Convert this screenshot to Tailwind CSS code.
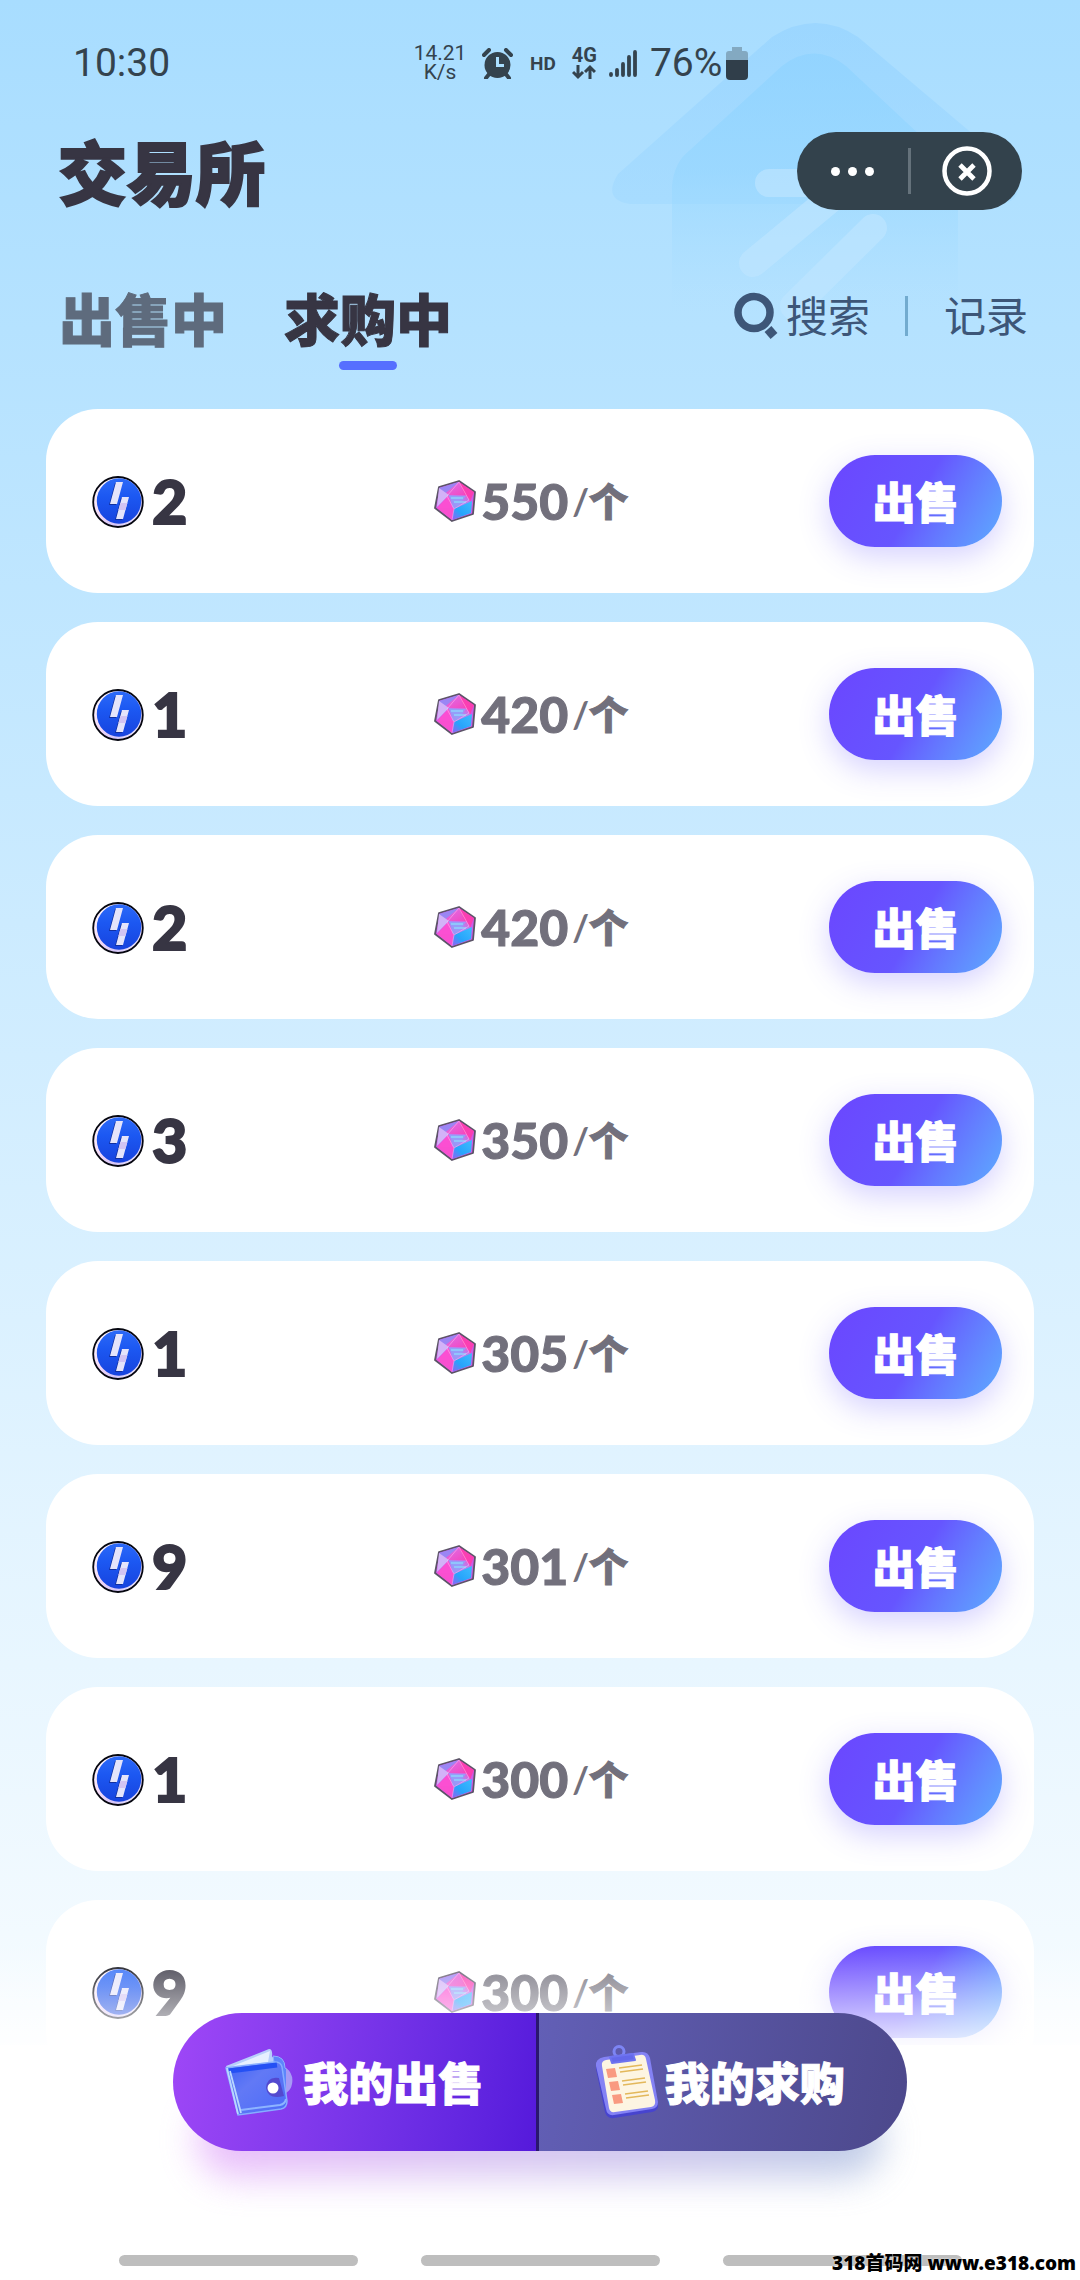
<!DOCTYPE html>
<html lang="zh-CN">
<head>
  <meta charset="UTF-8" />
  <meta name="viewport" content="width=device-width, initial-scale=1.0" />
  <title>交易所</title>
  <script src="https://cdn.jsdelivr.net/npm/@tailwindcss/browser@4"></script>
</head>
<body class="relative h-screen overflow-hidden bg-linear-to-b from-[#a8ddff] to-white font-['Lato','Noto_Sans_CJK_SC',sans-serif] text-[#373543]">

  <!-- shared artwork -->
  <svg class="absolute w-0 h-0" aria-hidden="true">
    <defs>
      <linearGradient id="coinFill" x1="0" y1="0" x2="0" y2="1">
        <stop offset="0" stop-color="#2c6af8" /><stop offset="0.4" stop-color="#1c58f2" /><stop offset="1" stop-color="#1743de" />
      </linearGradient>
      <linearGradient id="coinRim" x1="0" y1="0" x2="1" y2="1">
        <stop offset="0" stop-color="#ffffff" /><stop offset="0.45" stop-color="#f3d9f7" /><stop offset="0.7" stop-color="#d3c4f8" /><stop offset="1" stop-color="#ffffff" />
      </linearGradient>
      <linearGradient id="gemTop" x1="0" y1="0" x2="1" y2="1">
        <stop offset="0" stop-color="#d977f0" /><stop offset="1" stop-color="#f83fb8" />
      </linearGradient>
      <linearGradient id="gemMid" x1="0" y1="1" x2="1" y2="0">
        <stop offset="0" stop-color="#f54ad8" /><stop offset="0.5" stop-color="#a98cf8" /><stop offset="1" stop-color="#f052cf" />
      </linearGradient>
      <linearGradient id="gemBlue" x1="0" y1="1" x2="1" y2="0">
        <stop offset="0" stop-color="#9b5cf5" /><stop offset="0.4" stop-color="#27a4fb" /><stop offset="1" stop-color="#3fbcff" />
      </linearGradient>
      <linearGradient id="houseOuter" x1="0" y1="0" x2="0" y2="1">
        <stop offset="0" stop-color="#84caff" stop-opacity="0.35" /><stop offset="1" stop-color="#9ad6ff" stop-opacity="0.4" />
      </linearGradient>
      <linearGradient id="houseInner" x1="0" y1="0" x2="0" y2="1">
        <stop offset="0" stop-color="#8ad1ff" stop-opacity="0.55" /><stop offset="0.45" stop-color="#94d6ff" stop-opacity="0.6" /><stop offset="1" stop-color="#a8ddff" stop-opacity="0" />
      </linearGradient>
      <linearGradient id="walletFill" x1="0" y1="0" x2="1" y2="1">
        <stop offset="0" stop-color="#3d62f5" /><stop offset="0.4" stop-color="#6279f5" /><stop offset="1" stop-color="#4a6af8" />
      </linearGradient>
    </defs>
    <symbol id="coin" viewBox="0 0 52 52">
      <ellipse cx="26" cy="26" rx="24.800" ry="25" fill="url(#coinRim)" stroke="#05060f" stroke-width="1.800" />
      <ellipse cx="27" cy="25" rx="22.200" ry="22.800" fill="url(#coinFill)" />
      <path d="M24 6h7l-6 22h-7zM30 21h7l-6 22h-7z" fill="#12309f" transform="translate(-1 1)" />
      <path d="M24 6h7l-6 22h-7zM30 21h7l-6 22h-7z" fill="#e4e4fb" />
      <path d="m28.400 27h7l-2 7h-7z" fill="#d2c4f3" />
    </symbol>
    <symbol id="gem" viewBox="0 0 42 42">
      <path d="M25 1 41 12 39 34 18 41 1 28 5 7z" fill="#d05ae8" stroke="#5c5468" stroke-width="1.800" stroke-linejoin="round" />
      <path d="M25 2 5 8l3 10z" fill="#9a86f4" />
      <path d="M25 2 8 16l27 1z" fill="url(#gemTop)" />
      <path d="M25 2 40 12 35 24z" fill="#fb3eb2" />
      <path d="M5 8 3 27l12-12z" fill="#d3b2f8" />
      <path d="M15 15 3 28l16 1z" fill="#fb4fd2" />
      <path d="M14 15h18l6 9-14 4z" fill="url(#gemMid)" />
      <path d="M15 16h17l-9 12h-4z" fill="#8fa4fa" opacity="0.8" />
      <path d="M17 18h12M20 22h12" stroke="#8fe0ff" stroke-width="1.600" opacity="0.8" />
      <path d="M3 28h17l-2 12z" fill="#f94fd0" />
      <path d="M20 29 38 21 37 33 18 40z" fill="url(#gemBlue)" />
      <path d="M25 2 13 16 20 29M25 2l10 18-15 9-2 11" fill="none" stroke="#ffc6f2" stroke-width="0.800" opacity="0.600" />
    </symbol>
  </svg>

  <!-- faint house behind the header -->
  <svg class="absolute right-[60px] top-[20px] w-[408px] h-[300px]" viewBox="0 0 408 300" aria-hidden="true">
    <path d="M160 17Q204-11 246 17L401 148Q416 184 384 184H18Q-10 180 6 154z" fill="url(#houseOuter)" />
    <path d="M170 46Q202 21 234 46L324 130Q346 148 346 166V292H60V166Q62 142 78 130z" fill="url(#houseInner)" />
    <g fill="none" stroke="#bfe5ff" stroke-opacity="0.650" stroke-width="28" stroke-linecap="round">
      <path d="M157 163H216Q232 166 222 176L141 243" />
      <path d="M261 208 182 286" />
    </g>
  </svg>

  <div class="relative flex h-full flex-col">
    <!-- status bar -->
    <div class="flex h-[126px] shrink-0 items-center pl-[73px] font-['Roboto',sans-serif] text-[#34434e]">
      <span class="w-[340px] text-[39px] leading-none">10:30</span>
      <span class="w-[54px] text-center text-[21px] leading-[19px]">14.21 K/s</span>
      <svg class="ml-[15px] w-[31px] h-[31px]" viewBox="0 0 31 31" aria-label="闹钟">
        <path d="m2 7 5-5M29 7l-5-5M8 25l-4 5M23 25l4 5" stroke="#34434e" stroke-width="4" stroke-linecap="round" />
        <circle cx="15.500" cy="17" r="13" fill="#34434e" />
        <path d="M15.500 9v8.500H22" fill="none" stroke="#abdfff" stroke-width="3" />
      </svg>
      <span class="ml-[17px] text-[19px] font-bold leading-none">HD</span>
      <span class="ml-[16px] flex flex-col items-center text-[20px] font-bold leading-[18px]">4G
        <svg class="w-[24px] h-[16px]" viewBox="0 0 24 16"><path d="M6 1v11M1 8l5 5 5-5M18 15V4M13 8l5-5 5 5" fill="none" stroke="#34434e" stroke-width="3" /></svg>
      </span>
      <svg class="ml-[11px] w-[29px] h-[29px]" viewBox="0 0 29 29" aria-label="信号">
        <path d="M3 25v1M9 21v5M15 15v11M21 8v18M27 3v23" stroke="#34434e" stroke-width="3.800" stroke-linecap="round" />
      </svg>
      <span class="ml-[13px] text-[39px] leading-none">76%</span>
      <svg class="ml-[4px] w-[22px] h-[34px]" viewBox="0 0 22 34" aria-label="电池">
        <path d="M6 1h10v4h3q3 0 3 3v6H0V8q0-3 3-3h3z" fill="#83a9c1" />
        <path d="M0 14h22v16q0 4-4 4H4q-4 0-4-4z" fill="#303e4a" />
      </svg>
    </div>

    <!-- title + mini program capsule -->
    <header class="flex h-[90px] shrink-0 items-center justify-between pl-[58px] pr-[58px]">
      <h1 class="pt-[4px] text-[69px] font-black leading-none [-webkit-text-stroke:2px]">交易所</h1>
      <div class="flex h-[78px] w-[225px] items-center rounded-full bg-[#33424c]">
        <button type="button" aria-label="更多" class="flex h-full flex-1 items-center justify-center gap-[8px]">
          <span class="size-[9px] rounded-full bg-white"></span>
          <span class="size-[9px] rounded-full bg-white"></span>
          <span class="size-[9px] rounded-full bg-white"></span>
        </button>
        <span class="h-[46px] w-[3px] bg-[#65727b]"></span>
        <button type="button" aria-label="关闭" class="flex h-full flex-1 items-center justify-center">
          <svg class="size-[50px]" viewBox="0 0 50 50"><circle cx="25" cy="25" r="22.500" fill="none" stroke="#fff" stroke-width="4.500" /><path d="m18 19 14 14M32 19 18 33" stroke="#fff" stroke-width="4.800" /></svg>
        </button>
      </div>
    </header>

    <nav class="flex h-[193px] shrink-0 items-start justify-between pl-[59px] pr-[52px] pt-[74px]">
      <div class="flex gap-[57px] text-[56px] font-black leading-[60px] [-webkit-text-stroke:1px]">
        <button type="button" class="text-[#5e6b7d]">出售中</button>
        <button type="button" class="relative">求购中
          <span class="absolute left-1/2 top-[71px] h-[9px] w-[58px] -translate-x-1/2 rounded-full bg-[#566fff]"></span>
        </button>
      </div>
      <div class="flex h-[52px] items-center text-[42px] leading-none text-[#3d5678]">
        <a href="#search" class="flex items-center gap-[8px]">
          <svg class="w-[45px] h-[48px]" viewBox="0 0 45 48" aria-hidden="true">
            <circle cx="21" cy="20.500" r="16" fill="none" stroke="#3d5678" stroke-width="7.500" />
            <path d="m35 37 6 7" stroke="#3d5678" stroke-width="9" />
          </svg>搜索
        </a>
        <span class="ml-[35px] mr-[36px] h-[40px] w-[3px] bg-[#72abcf]"></span>
        <a href="#records">记录</a>
      </div>
    </nav>

    <ul id="orderList" class="flex flex-col gap-[29px] px-[46px]"></ul>
  </div>

  <!-- fade over the end of the list + action bar -->
  <div class="absolute inset-x-0 bottom-0 flex flex-col">
    <div class="h-[100px] bg-linear-to-b from-white/0 to-white/85"></div>
    <div class="flex h-[235px] flex-col items-center justify-between bg-white pb-[14px]">
      <div class="relative -mt-[32px] w-[68%]">
        <div class="absolute inset-x-[24px] bottom-[-26px] h-[76px] rounded-full bg-linear-to-r from-[#e2a2fa] to-[#a2b6dc] opacity-70 blur-[18px]"></div>
        <div class="relative flex h-[138px] overflow-hidden rounded-full text-[45px] font-black leading-none text-white [-webkit-text-stroke:1px]">
          <button type="button" class="flex flex-1 items-center justify-center gap-[10px] border-r-[3px] border-[#2a176e] bg-linear-100 from-[#9f47f7] to-[#5519db]">
            <svg class="w-[68px] h-[68px]" viewBox="0 0 68 68" aria-hidden="true">
              <path d="M1 18 44 1q4 0 3 8l8 1 5 12-55 8z" fill="#b7cffb" />
              <path d="m8 18 37-15-2 11z" fill="#e6f0ff" />
              <path d="M48 8q12 0 12 12 6 3 5 13-1 8-5 10l-5 8z" fill="#5d86fb" stroke="#8fb0ff" />
              <path d="M61 20q8 6 6 16-1 6-6 9z" fill="#a79af5" />
              <path d="M1 20 50 14q6 0 7 5l5 34q0 7-6 8l-43 6z" fill="url(#walletFill)" stroke="#86adff" stroke-width="1.500" />
              <path d="M4 23 52 17" stroke="#2450f4" stroke-width="5" />
              <path d="m2 20 11 46M5 23l11 42" stroke="#b9d7ff" stroke-width="1.800" />
              <path d="m16 62 39-5q5-1 6-6" fill="none" stroke="#8db4ff" stroke-width="2" />
              <path d="M54 30Q42 28 41 40q2 12 18 8z" fill="#5349cf" />
              <circle cx="48" cy="40" r="5.500" fill="#fff" />
            </svg><span class="pt-[4px]">我的出售</span>
          </button>
          <button type="button" class="flex flex-1 items-center justify-center gap-[6px] bg-linear-100 from-[#625fb6] to-[#4c488b] pr-[6px]">
            <svg class="w-[64px] h-[74px]" viewBox="0 0 64 74" aria-hidden="true">
              <path d="m9 15 37-6q7-1 9 7l8 42q1 8-6 9l-38 6q-7 1-9-6L1 24q-1-7 8-9z" fill="#4744cf" />
              <path d="m9 12 37-5q7-1 9 6l8 44q0 6-6 7l-38 6q-7 1-8-6L1 21q-1-7 8-9z" fill="#8482f4" />
              <path d="m11 15 34-5q5-1 6 4l9 41q1 6-4 7l-36 5q-5 1-6-4L7 21q-1-5 4-6z" fill="#fdf5e2" />
              <circle cx="24" cy="6.500" r="5" fill="none" stroke="#7d85f4" stroke-width="3" />
              <path d="m15 12 23-3 2 6-23 3z" fill="#6468ea" stroke="#6e73f0" stroke-width="2" stroke-linejoin="round" />
              <g fill="#f99a80"><path d="m11 24 9-1 2 9-9 1zM14 37l9-1 2 9-9 1zM17 50l9-1 2 9-9 1z" /></g>
              <path d="m24 23 23-3M25 27l23-3M27 36l23-3M28 40l23-3M30 49l23-3M31 53l23-3" stroke="#e3b85b" stroke-width="1.600" />
            </svg><span class="pt-[4px]">我的求购</span>
          </button>
        </div>
      </div>
      <div class="flex w-full justify-center gap-[63px]">
        <span class="h-[11px] w-[239px] rounded-full bg-[#bebebe]"></span>
        <span class="h-[11px] w-[239px] rounded-full bg-[#bebebe]"></span>
        <span class="h-[11px] w-[239px] rounded-full bg-[#bebebe]"></span>
      </div>
    </div>
    <p class="absolute bottom-[5px] right-[4px] whitespace-nowrap font-['Noto_Sans','Noto_Sans_CJK_SC',sans-serif] text-[19px] font-black leading-[24px] text-black text-shadow-[0_0_2px_white]">318首码网 www.e318.com</p>
  </div>

  <script>
    const orders = [
      { count: 2, price: 550 },
      { count: 1, price: 420 },
      { count: 2, price: 420 },
      { count: 3, price: 350 },
      { count: 1, price: 305 },
      { count: 9, price: 301 },
      { count: 1, price: 300 },
      { count: 9, price: 300 }
    ];

    document.getElementById("orderList").innerHTML = orders.map((o) => `
      <li class="grid h-[184px] shrink-0 grid-cols-[3fr_3fr_2fr] items-center rounded-[52px] bg-white pl-[46px] pr-[32px]">
        <div class="flex items-center gap-[8px] pt-[2px]">
          <svg class="size-[52px]"><use href="#coin" /></svg>
          <span class="pb-[4px] text-[61px] font-black leading-none [-webkit-text-stroke:2px]">${o.count}</span>
        </div>
        <div class="flex items-center pl-[1px] text-[#72707c]">
          <svg class="mr-[5px] size-[42px]"><use href="#gem" /></svg>
          <span class="text-[50px] font-black leading-none [-webkit-text-stroke:1px]">${o.price}</span>
          <span class="ml-[4px] text-[36px] font-bold leading-none">/</span>
          <span class="text-[39px] font-black leading-none [-webkit-text-stroke:1px]">个</span>
        </div>
        <button type="button" class="h-[92px] w-[173px] justify-self-end rounded-full bg-linear-120 from-[#6a49ff] from-10% via-[#6655ff] via-50% to-[#5cabff] pt-[2px] text-[43px] font-black leading-none text-white shadow-[0_10px_30px_#5b4bff40] [-webkit-text-stroke:1px]">出售</button>
      </li>`).join("");
  </script>
</body>
</html>
